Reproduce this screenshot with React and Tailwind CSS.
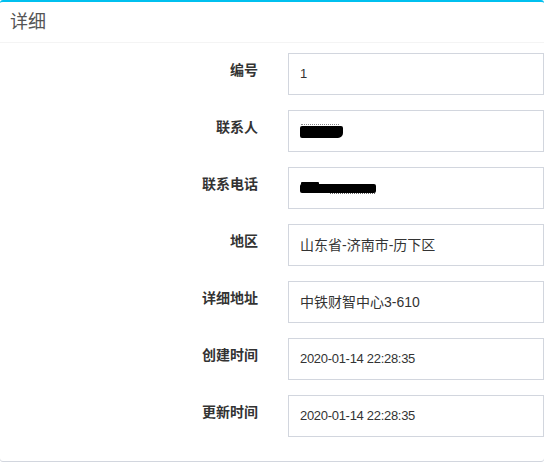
import React from "react";

const CJK = { fontFamily: '"Liberation Sans", "Noto Sans CJK SC", sans-serif' };

function Field({ label, children, size = "text-[14px]" }) {
  return (
    <div className="flex">
      <div className="w-[258px] shrink-0 pt-[7px] text-right text-[14px] leading-[20px] font-bold text-[#333]">
        {label}
      </div>
      <div
        className={`ml-[30px] flex h-[42px] flex-1 items-center border border-[#d2d6de] pl-[11px] text-[#333] ${size}`}
      >
        {children}
      </div>
    </div>
  );
}

export default function App() {
  return (
    <div className="h-[463px] w-[544px] bg-white" style={CJK}>
      <div className="rounded-[3px] border-t-2 border-[#00c0ef] bg-white shadow-[0_1px_0_#d2d6de]">
        <div className="h-[41px] border-b border-[#f4f4f4] px-[10px] pt-[10px] text-[18px] leading-[20px] text-[#555]">
          详细
        </div>
        <div className="flex flex-col gap-[15px] pt-[10px] pb-[24px]">
          <Field label="编号" size="text-[13px]">1</Field>
          <Field label="联系人">
            <div className="flex flex-col">
              <div className="ml-[1px] h-[2px] w-[38px] border-t border-dotted border-[#888]" />
              <div className="h-[12px] w-[43px] rounded-[2px] rounded-br-[5px] bg-black" />
            </div>
          </Field>
          <Field label="联系电话">
            <div className="relative h-[13px] w-[76px]">
              <div className="absolute left-0 top-[2px] h-[9px] w-[76px] rounded-[2px] bg-black" />
              <div className="absolute left-[1px] top-0 h-[3px] w-[18px] rounded-[1px] bg-black" />
              <div className="absolute left-[30px] top-[11px] h-[1px] w-[45px] border-t border-dotted border-[#666]" />
            </div>
          </Field>
          <Field label="地区">山东省-济南市-历下区</Field>
          <Field label="详细地址">中铁财智中心3-610</Field>
          <Field label="创建时间" size="text-[13px] tracking-[-0.3px]">2020-01-14 22:28:35</Field>
          <Field label="更新时间" size="text-[13px] tracking-[-0.3px]">2020-01-14 22:28:35</Field>
        </div>
      </div>
    </div>
  );
}
